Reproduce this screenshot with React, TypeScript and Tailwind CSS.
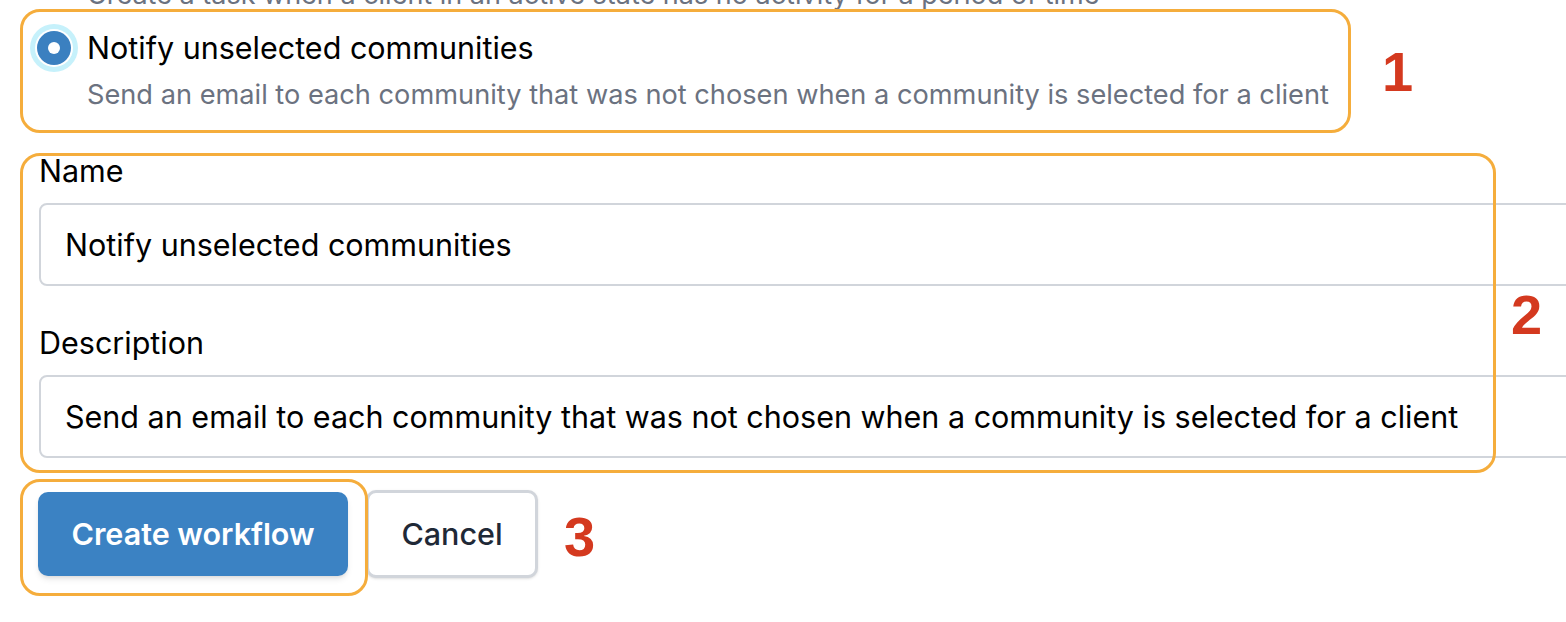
import React from 'react';

const annotations = [
    { id: 1, box: 'left-[20px] top-[9px] w-[1331px] h-[124px]', num: 'left-[1382px] top-[44px]' },
    { id: 2, box: 'left-[20px] top-[153px] w-[1476px] h-[320px]', num: 'left-[1511px] top-[287px]' },
    { id: 3, box: 'left-[20px] top-[479px] w-[348px] h-[117px]', num: 'left-[564px] top-[509px]' },
];

function Field({ label, value, className = '' }: { label: string; value: string; className?: string }) {
    return (
        <div className={className}>
            <label className="block text-[30.5px] leading-[36px] text-black mb-[14px]">{label}</label>
            <div className="w-[1600px] h-[83px] flex items-center border-2 border-[#d1d5db] rounded-[8px] pl-[24px] text-[30.5px] text-black">
                {value}
            </div>
        </div>
    );
}

export default function App() {
    return (
        <div className="relative w-[1566px] h-[622px] overflow-hidden bg-white font-['Inter',sans-serif]">
            {/* previous option, scrolled mostly out of view */}
            <p className="-mt-[20px] pl-[87px] text-[27px] leading-[30px] text-[#6b7280] whitespace-nowrap">
                Create a task when a client in an active state has no activity for a period of time
            </p>

            <div className="flex items-start gap-[9px] pl-[30px] mt-[12px]">
                <span className="mt-[2px] w-[48px] h-[48px] shrink-0 rounded-full bg-[#c6f1fb] flex items-center justify-center">
                    <span className="w-[38px] h-[38px] rounded-full bg-white flex items-center justify-center">
                        <span className="w-[34px] h-[34px] rounded-full bg-[#3b80c0] flex items-center justify-center">
                            <span className="w-[12px] h-[12px] rounded-full bg-white" />
                        </span>
                    </span>
                </span>
                <div className="pt-[8px]">
                    <div className="text-[30.5px] leading-[36px] text-black whitespace-nowrap">Notify unselected communities</div>
                    <div className="mt-[11px] text-[27.2px] leading-[36px] text-[#6b7280] whitespace-nowrap">
                        Send an email to each community that was not chosen when a community is selected for a client
                    </div>
                </div>
            </div>

            <div className="pl-[39px] mt-[40px]">
                <Field label="Name" value="Notify unselected communities" />
                <Field
                    label="Description"
                    value="Send an email to each community that was not chosen when a community is selected for a client"
                    className="mt-[39px]"
                />
                <div className="flex items-center gap-[18px] mt-[32px] -ml-px">
                    <button className="w-[310px] h-[84px] rounded-[10px] bg-[#3b82c3] text-white text-[30.5px] font-semibold shadow-md">
                        Create workflow
                    </button>
                    <button className="w-[172px] h-[88px] rounded-[10px] bg-white border-[3px] border-[#d1d5db] text-[#1f2937] text-[30.5px] font-medium shadow-sm">
                        Cancel
                    </button>
                </div>
            </div>

            {annotations.map((a) => (
                <React.Fragment key={a.id}>
                    <div className={`absolute ${a.box} border-[3px] border-[#f5ad3c] rounded-[20px] pointer-events-none`} />
                    <div className={`absolute ${a.num} font-['Liberation_Sans',Arial,sans-serif] font-bold text-[56px] leading-[56px] text-[#d4391f]`}>
                        {a.id}
                    </div>
                </React.Fragment>
            ))}
        </div>
    );
}
